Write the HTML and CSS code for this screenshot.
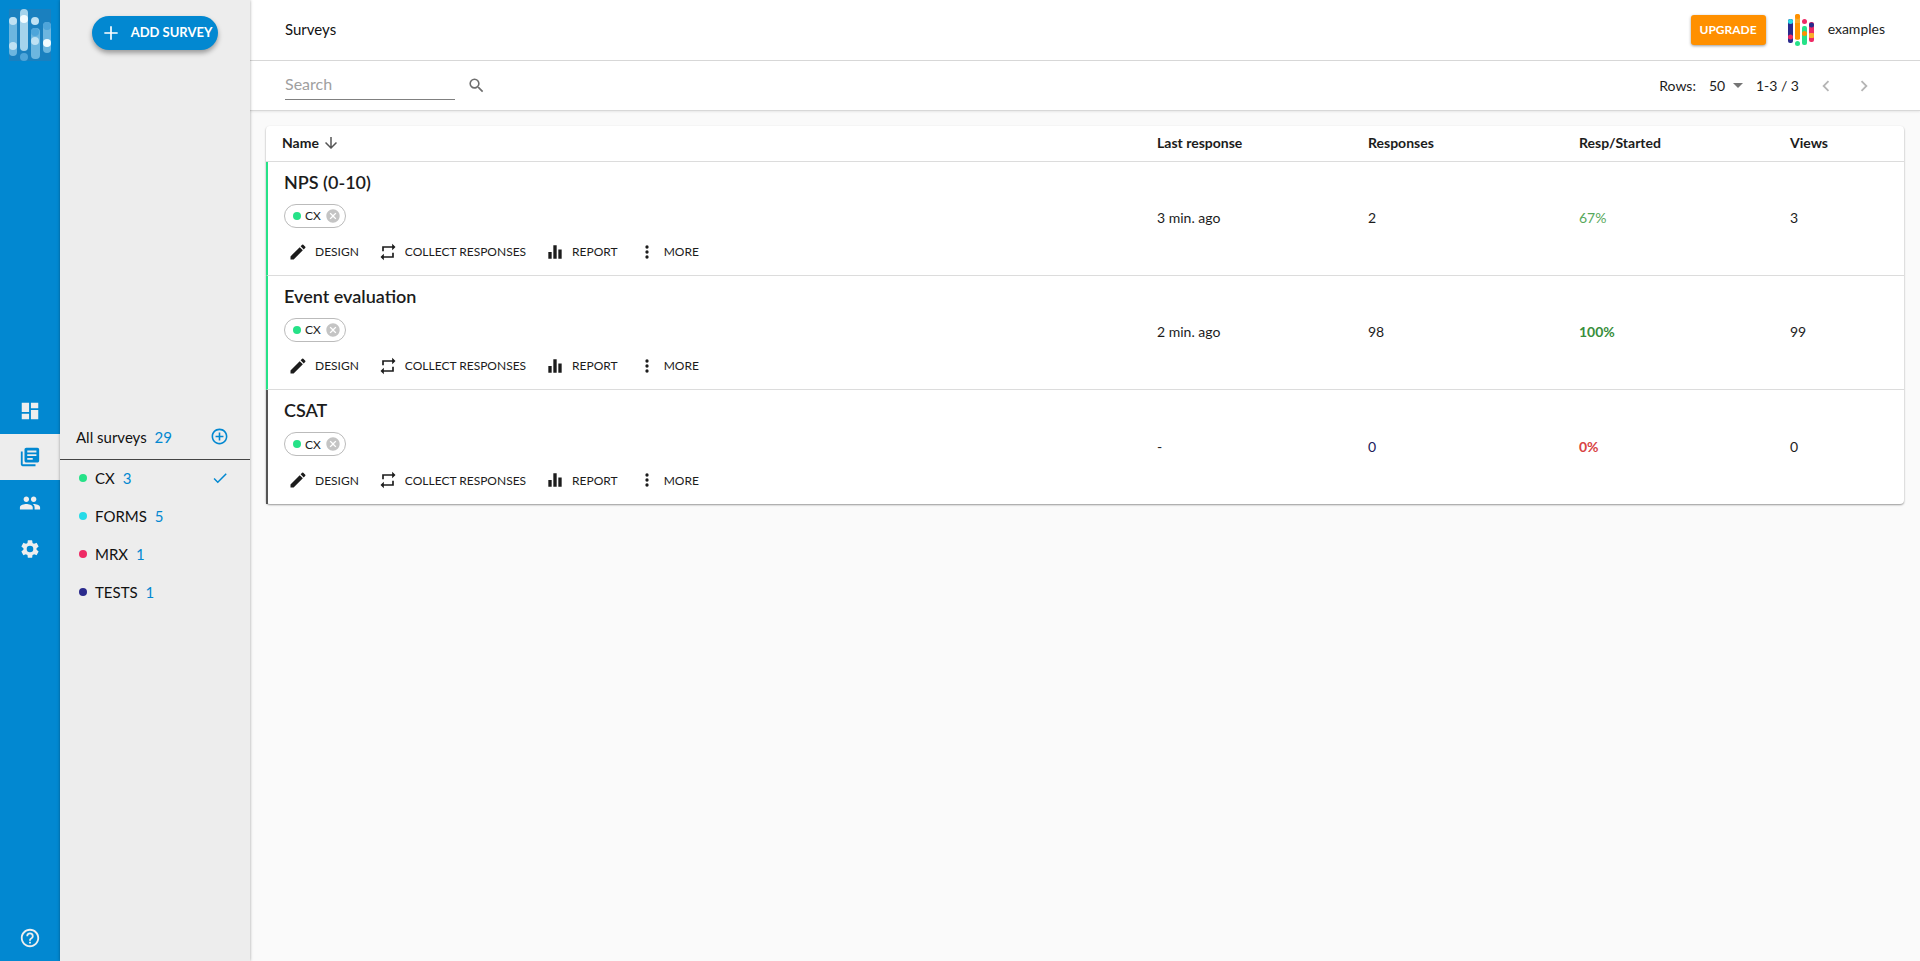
FILE: index.html
```html
<!DOCTYPE html>
<html lang="en">
<head>
<meta charset="utf-8">
<title>Surveys</title>
<meta name="viewport" content="width=device-width, initial-scale=1">
<link rel="stylesheet" href="styles.css">
</head>
<body>
<svg class="sprite" aria-hidden="true">
  <symbol id="edit" viewBox="0 0 24 24"><path d="M3 17.25V21h3.75L17.81 9.94l-3.75-3.75L3 17.25zM20.71 7.04a1 1 0 0 0 0-1.41l-2.34-2.34a1 1 0 0 0-1.41 0l-1.83 1.83 3.75 3.75 1.83-1.83z"/></symbol>
  <symbol id="repeat" viewBox="0 0 24 24"><path d="M5 5h12V2l4 4-4 4V7H7v4H5zM19 19H7v3l-4-4 4-4v3h10v-4h2z"/></symbol>
  <symbol id="bars" viewBox="0 0 24 24"><path d="M4 12h4v8H4zM10 4h4v16h-4zM16 9h4v11h-4z"/></symbol>
  <symbol id="dots" viewBox="0 0 24 24"><circle cx="12" cy="6" r="2"/><circle cx="12" cy="12" r="2"/><circle cx="12" cy="18" r="2"/></symbol>
  <symbol id="cancel" viewBox="0 0 24 24"><path d="M12 2C6.47 2 2 6.47 2 12s4.47 10 10 10 10-4.47 10-10S17.53 2 12 2zm5 13.59L15.59 17 12 13.41 8.41 17 7 15.59 10.59 12 7 8.41 8.41 7 12 10.59 15.59 7 17 8.41 13.41 12 17 15.59z"/></symbol>
</svg>
<div class="app">
  <nav class="rail" aria-label="Main">
    <a class="rail-logo" href="#" aria-label="Home">
      <svg width="42" height="52" viewBox="0 0 42 52">
        <rect width="42" height="52" fill="#1a80bf"/>
        <g fill="#6db6df"><rect y="8" width="8" height="39" rx="4"/><rect x="22" y="19" width="9" height="31" rx="4"/><rect x="34" y="13" width="8" height="31" rx="4"/></g>
        <rect x="11" y="0" width="8" height="42" rx="4" fill="#a5d3ec"/>
        <g fill="#bfe1f3"><circle cx="4" cy="12" r="4"/><circle cx="4" cy="37" r="4"/><circle cx="26" cy="12" r="4"/><circle cx="26" cy="32" r="4"/></g>
        <g fill="#f2fbff"><circle cx="15" cy="10" r="4"/><circle cx="38" cy="34" r="4"/></g>
        <g fill="#4ea5da"><circle cx="15" cy="48" r="4"/><circle cx="26" cy="23" r="4"/><circle cx="38" cy="17" r="4"/></g>
      </svg>
    </a>
    <div class="rail-menu">
      <a class="rail-item" href="#" aria-label="Dashboard"><svg width="22" height="22" viewBox="0 0 24 24"><path d="M3 13h8V3H3v10zm0 8h8v-6H3v6zm10 0h8V11h-8v10zm0-18v6h8V3h-8z"/></svg></a>
      <a class="rail-item active" href="#" aria-label="Surveys"><svg width="22" height="22" viewBox="0 0 24 24"><path d="M4 6H2v14c0 1.1.9 2 2 2h14v-2H4V6zm16-4H8c-1.1 0-2 .9-2 2v12c0 1.1.9 2 2 2h12c1.1 0 2-.9 2-2V4c0-1.1-.9-2-2-2zm-1 9H9V9h10v2zm-4 4H9v-2h6v2zm4-8H9V5h10v2z"/></svg></a>
      <a class="rail-item" href="#" aria-label="People"><svg width="22" height="22" viewBox="0 0 24 24"><path d="M16 11c1.66 0 2.99-1.34 2.99-3S17.66 5 16 5s-3 1.34-3 3 1.34 3 3 3zm-8 0c1.66 0 2.99-1.34 2.99-3S9.66 5 8 5 5 6.34 5 8s1.34 3 3 3zm0 2c-2.33 0-7 1.17-7 3.5V19h14v-2.500C15 14.170 10.330 13 8 13zm8 0c-.29 0-.62.02-.97.05 1.160.84 1.970 1.970 1.970 3.450V19h6v-2.500c0-2.330-4.670-3.500-7-3.500z"/></svg></a>
      <a class="rail-item" href="#" aria-label="Settings"><svg width="22" height="22" viewBox="0 0 24 24"><path d="M19.140 12.940c.04-.3.060-.61.060-.94s-.02-.64-.07-.94l2.030-1.580a.49.49 0 0 0 .12-.61l-1.920-3.320a.488.488 0 0 0-.59-.22l-2.390.96a7.030 7.030 0 0 0-1.620-.94l-.36-2.540a.484.484 0 0 0-.48-.41h-3.840c-.24 0-.43.17-.47.41l-.36 2.540c-.59.24-1.130.57-1.620.94l-2.390-.96c-.22-.08-.47 0-.59.22L2.740 8.870c-.12.21-.08.47.12.61l2.030 1.580c-.05.3-.09.63-.09.94s.02.64.07.94l-2.030 1.580a.49.49 0 0 0-.12.61l1.920 3.320c.12.22.37.29.59.22l2.390-.96c.5.38 1.030.7 1.620.94l.36 2.540c.05.24.24.41.48.41h3.840c.24 0 .44-.17.47-.41l.36-2.540c.59-.24 1.130-.56 1.620-.94l2.390.96c.22.08.47 0 .59-.22l1.920-3.320a.49.49 0 0 0-.12-.61l-2.010-1.580zM12 15.600A3.600 3.600 0 1 1 12 8.400a3.600 3.600 0 0 1 0 7.200z"/></svg></a>
    </div>
    <a class="rail-item" href="#" aria-label="Help"><svg width="22" height="22" viewBox="0 0 24 24"><path d="M11 18h2v-2h-2v2zm1-16C6.480 2 2 6.480 2 12s4.480 10 10 10 10-4.480 10-10S17.520 2 12 2zm0 18c-4.410 0-8-3.590-8-8s3.590-8 8-8 8 3.590 8 8-3.590 8-8 8zm0-14a4 4 0 0 0-4 4h2c0-1.100.9-2 2-2s2 .9 2 2c0 2-3 1.750-3 5h2c0-2.250 3-2.500 3-5a4 4 0 0 0-4-4z"/></svg></a>
  </nav>

  <aside class="side">
    <button class="add" type="button"><svg width="20" height="20" viewBox="0 0 24 24"><path d="M20 13h-7v7h-2v-7H4v-2h7V4h2v7h7z"/></svg><span>ADD SURVEY</span></button>
    <div class="folders">
      <div class="all"><a href="#">All surveys <span class="count">29</span></a>
        <button class="icon-btn" type="button" aria-label="Add folder"><svg width="19" height="19" viewBox="0 0 24 24"><path d="M13 7h-2v4H7v2h4v4h2v-4h4v-2h-4V7zm-1-5C6.480 2 2 6.480 2 12s4.480 10 10 10 10-4.480 10-10S17.520 2 12 2zm0 18c-4.410 0-8-3.590-8-8s3.590-8 8-8 8 3.590 8 8-3.590 8-8 8z"/></svg></button>
      </div>
      <ul class="folder-list">
        <li><a href="#"><span class="dot green"></span>CX <span class="count">3</span><svg class="check" width="18" height="18" viewBox="0 0 24 24"><path d="M9 16.170 4.830 12l-1.420 1.410L9 19 21 7l-1.410-1.410z"/></svg></a></li>
        <li><a href="#"><span class="dot cyan"></span>FORMS <span class="count">5</span></a></li>
        <li><a href="#"><span class="dot pink"></span>MRX <span class="count">1</span></a></li>
        <li><a href="#"><span class="dot navy"></span>TESTS <span class="count">1</span></a></li>
      </ul>
    </div>
  </aside>

  <main class="main">
    <header class="top">
      <h1>Surveys</h1>
      <div class="account">
        <button class="upgrade" type="button">UPGRADE</button>
        <svg width="26" height="32" viewBox="0 0 26 32">
          <rect y="5" width="5" height="24" rx="2" fill="#2a2a8c"/><circle cx="2.500" cy="7.500" r="2.500" fill="#26dbe8"/><circle cx="2.500" cy="23" r="2.500" fill="#ee2a64"/>
          <rect x="7" width="5" height="26" rx="2" fill="#fbac2c"/><circle cx="9.500" cy="2.500" r="2.500" fill="#ff9000"/><rect x="7" y="9" width="5" height="16" fill="#ff9500"/><circle cx="9.500" cy="29.500" r="2.500" fill="#26e288"/>
          <circle cx="16.500" cy="7.500" r="2.500" fill="#ee2a64"/><rect x="14" y="12" width="5" height="19" rx="2" fill="#26e288"/><circle cx="16.500" cy="19.500" r="2.500" fill="#ff9000"/>
          <rect x="21" y="8" width="5" height="20" rx="2" fill="#ee2a64"/><circle cx="23.500" cy="11" r="2.500" fill="#2a2a8c"/><rect x="21" y="19" width="5" height="5" rx="1" fill="#fbac2c"/>
        </svg>
        <span class="user">examples</span>
      </div>
    </header>

    <div class="tools">
      <form class="search" role="search">
        <input type="search" placeholder="Search" aria-label="Search">
        <button class="icon-btn" type="button" aria-label="Search"><svg width="19" height="19" viewBox="0 0 24 24"><path d="M15.500 14h-.79l-.28-.27A6.470 6.470 0 0 0 16 9.500 6.500 6.500 0 1 0 9.500 16c1.610 0 3.090-.59 4.230-1.570l.27.28v.79l5 4.990L20.490 19l-4.990-5zm-6 0C7.010 14 5 11.990 5 9.500S7.010 5 9.500 5 14 7.010 14 9.500 11.990 14 9.500 14z"/></svg></button>
      </form>
      <div class="pager">
        <label for="rows">Rows:</label>
        <span class="select"><select id="rows"><option>50</option><option>100</option></select><svg width="10" height="5" viewBox="0 0 10 5"><path d="M0 0h10L5 5z"/></svg></span>
        <span>1-3 / 3</span>
        <button type="button" aria-label="Previous page" disabled><svg width="22" height="22" viewBox="0 0 24 24"><path d="M15.410 7.410 14 6l-6 6 6 6 1.410-1.410L10.830 12z"/></svg></button>
        <button type="button" aria-label="Next page" disabled><svg width="22" height="22" viewBox="0 0 24 24"><path d="M10 6 8.590 7.410 13.170 12l-4.580 4.590L10 18l6-6z"/></svg></button>
      </div>
    </div>

    <section class="content">
      <table class="surveys">
        <colgroup><col><col class="c-num"><col class="c-num"><col class="c-num"><col class="c-last"></colgroup>
        <thead><tr>
          <th scope="col"><button class="sort" type="button">Name <svg width="18" height="18" viewBox="0 0 24 24"><path d="m20 12-1.410-1.410L13 16.170V4h-2v12.170l-5.580-5.590L4 12l8 8z"/></svg></button></th>
          <th scope="col">Last response</th><th scope="col">Responses</th><th scope="col">Resp/Started</th><th scope="col">Views</th>
        </tr></thead>
        <tbody>
          <tr class="open">
            <td><h2>NPS (0-10)</h2>
              <div class="tag"><span class="dot green"></span>CX<button type="button" aria-label="Remove CX"><svg width="16" height="16"><use href="#cancel"/></svg></button></div>
              <div class="actions"><button class="act" type="button"><svg width="20" height="20"><use href="#edit"/></svg>DESIGN</button><button class="act" type="button"><svg width="20" height="20"><use href="#repeat"/></svg>COLLECT RESPONSES</button><button class="act" type="button"><svg width="20" height="20"><use href="#bars"/></svg>REPORT</button><button class="act" type="button"><svg width="20" height="20"><use href="#dots"/></svg>MORE</button></div></td>
            <td>3 min. ago</td><td>2</td><td class="mid">67%</td><td>3</td>
          </tr>
          <tr class="open">
            <td><h2>Event evaluation</h2>
              <div class="tag"><span class="dot green"></span>CX<button type="button" aria-label="Remove CX"><svg width="16" height="16"><use href="#cancel"/></svg></button></div>
              <div class="actions"><button class="act" type="button"><svg width="20" height="20"><use href="#edit"/></svg>DESIGN</button><button class="act" type="button"><svg width="20" height="20"><use href="#repeat"/></svg>COLLECT RESPONSES</button><button class="act" type="button"><svg width="20" height="20"><use href="#bars"/></svg>REPORT</button><button class="act" type="button"><svg width="20" height="20"><use href="#dots"/></svg>MORE</button></div></td>
            <td>2 min. ago</td><td>98</td><td class="high">100%</td><td>99</td>
          </tr>
          <tr class="draft">
            <td><h2>CSAT</h2>
              <div class="tag"><span class="dot green"></span>CX<button type="button" aria-label="Remove CX"><svg width="16" height="16"><use href="#cancel"/></svg></button></div>
              <div class="actions"><button class="act" type="button"><svg width="20" height="20"><use href="#edit"/></svg>DESIGN</button><button class="act" type="button"><svg width="20" height="20"><use href="#repeat"/></svg>COLLECT RESPONSES</button><button class="act" type="button"><svg width="20" height="20"><use href="#bars"/></svg>REPORT</button><button class="act" type="button"><svg width="20" height="20"><use href="#dots"/></svg>MORE</button></div></td>
            <td>-</td><td class="zero">0</td><td class="low">0%</td><td>0</td>
          </tr>
        </tbody>
      </table>
    </section>
  </main>
</div>
</body>
</html>
```
FILE: styles.css
```css
* { box-sizing: border-box; }
body { margin: 0; font-family: Lato, "Open Sans", sans-serif; font-size: 14px; color: #1c1c1c; background: #fafafa; }
a { color: inherit; text-decoration: none; }
button { font: inherit; color: inherit; background: none; border: 0; padding: 0; cursor: pointer; }
svg { display: block; fill: currentColor; flex: none; }
.sprite { position: absolute; width: 0; height: 0; }
.app { display: flex; min-height: 100vh; }

.rail { width: 60px; background: #0288d1; color: #eee; display: flex; flex-direction: column; justify-content: space-between; }
.rail-logo { display: flex; justify-content: center; height: 70px; padding-top: 9px; }
.rail-item { display: flex; align-items: center; justify-content: center; height: 46px; }
.rail-item.active { background: #ededed; color: #0288d1; }
.rail-menu { margin-bottom: 26px; }

.side { width: 190px; background: #ededed; display: flex; flex-direction: column; align-items: center; box-shadow: 0 0 3px rgba(0,0,0,.35); z-index: 1; color: #111; font-size: 15px; }
.add { display: flex; align-items: center; gap: 10px; height: 34px; margin-top: 16px; padding: 0 6px 0 9px; border-radius: 17px; background: #0288d1; color: #fff; font-size: 13px; font-weight: 700; box-shadow: 0 3px 5px rgba(0,0,0,.35); white-space: nowrap; }
.add span { padding-bottom: 2px; }
.folders { width: 100%; margin: auto 0; padding-top: 15px; }
.all { display: flex; align-items: center; justify-content: space-between; height: 46px; padding: 0 21px 0 16px; border-bottom: 1px solid #444; }
.count { color: #0288d1; margin-left: 4px; }
.all .icon-btn { color: #0288d1; }
.folder-list { list-style: none; margin: 0; padding: 0; }
.folder-list a { display: flex; align-items: center; height: 38px; padding: 0 21px 2px 19px; }
.folder-list .count { margin-left: 8px; }
.dot { width: 8px; height: 8px; border-radius: 50%; flex: none; }
.folder-list .dot { margin-right: 8px; }
.green { background: #26e288; }
.cyan { background: #26dbe8; }
.pink { background: #ee2a64; }
.navy { background: #2a2a8c; }
.check { margin-left: auto; color: #0288d1; }

.main { flex: 1; min-width: 0; }
.top, .tools { display: flex; align-items: center; justify-content: space-between; background: #fff; border-bottom: 1px solid #d8d8d8; padding: 0 35px; }
.top { height: 61px; }
.tools { height: 50px; padding-bottom: 1px; box-shadow: 0 1px 2px rgba(0,0,0,.08); }
.top h1 { margin: 0; padding-bottom: 2px; font-size: 15px; font-weight: 400; color: #111; }
.account { display: flex; align-items: center; gap: 14px; }
.user { padding-bottom: 3px; }
.upgrade { height: 30px; padding: 0 9px 2px; margin-right: 8px; border-radius: 3px; background: #ff9000; color: #fff; font-size: 12px; font-weight: 700; box-shadow: 0 1px 3px rgba(0,0,0,.4); }
.search { display: flex; align-items: center; gap: 12px; }
.search input { width: 170px; height: 30px; border: 0; border-bottom: 1px solid #808080; background: none; padding: 0 0 2px; font: inherit; font-size: 16px; outline: 0; }
.search input::placeholder { color: #a0a0a0; opacity: 1; }
.search .icon-btn { color: #6e6e6e; }
.pager { display: flex; align-items: center; gap: 13px; padding-right: 10px; }
.select { display: flex; align-items: center; gap: 7px; color: #757575; }
.select select { appearance: none; border: 0; background: none; font: inherit; color: #1c1c1c; padding: 0; width: 17px; }
.pager button { color: #b5b5b5; padding-top: 2px; margin-left: 3px; }

.content { padding: 15px 16px; }
.surveys { width: 100%; table-layout: fixed; border-collapse: separate; border-spacing: 0; background: #fff; border-radius: 4px; box-shadow: 0 1px 2px rgba(0,0,0,.4); font-size: 14px; }
.c-num { width: 211px; }
.c-last { width: 130px; }
.surveys th { height: 36px; padding: 0 16px 2px; text-align: left; font-weight: 700; border-bottom: 1px solid #dcdcdc; }
.sort { display: flex; align-items: center; gap: 3px; font-weight: 700; }
.sort svg { color: #555; }
.surveys td { padding: 0 16px 2px; border-bottom: 1px solid #dcdcdc; }
.surveys tr:last-child td { border-bottom: 0; }
.surveys td:first-child { height: 114px; padding-bottom: 4px; border-left: 2px solid #26e288; }
.surveys .draft td:first-child { border-left-color: #555; }
.surveys h2 { margin: 0 0 12px; font-size: 18px; line-height: 20px; font-weight: 600; }
.tag { display: inline-flex; align-items: center; height: 24px; padding: 0 4px 0 8px; border: 1px solid #bbb; border-radius: 12px; font-size: 12px; gap: 4px; }
.tag button { color: #c4c4c4; }
.actions { display: flex; gap: 19px; margin-top: 14px; padding-left: 4px; }
.act { display: flex; align-items: center; gap: 7px; font-size: 12px; }
.mid { color: #57a85b; }
.high { color: #388e3c; font-weight: 700; }
.low { color: #d84343; font-weight: 700; }
.zero { color: #20205a; }
```
